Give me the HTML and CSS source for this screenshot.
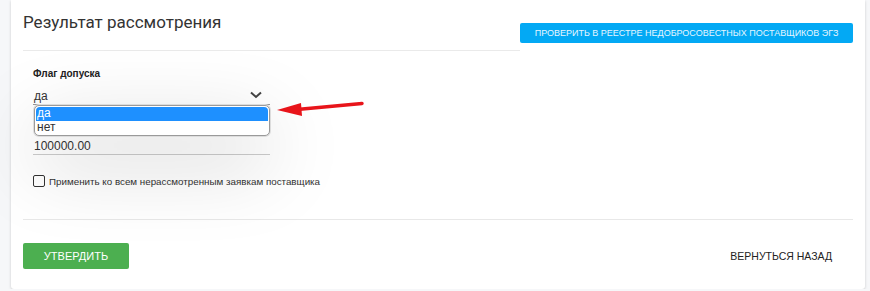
FILE: index.html
```html
<!DOCTYPE html>
<html lang="ru">
<head>
  <meta charset="UTF-8" />
  <title>Результат рассмотрения</title>
  <link rel="stylesheet" href="styles.css">
</head>
<body>
  <div class="card">
    <div class="card-head">
      <div class="card-title">Результат рассмотрения</div>
      <button class="btn btn-info">ПРОВЕРИТЬ В РЕЕСТРЕ НЕДОБРОСОВЕСТНЫХ ПОСТАВЩИКОВ ЭГЗ</button>
    </div>

    <div class="form">
      <div class="field">
        <div class="field-label">Флаг допуска</div>
        <div class="select">
          <span>да</span>
          <svg class="chevron" width="12" height="8" viewBox="0 0 12 8">
            <path d="M1 1.5 L6 6 L11 1.5" fill="none" stroke="#444" stroke-width="2"/>
          </svg>
        </div>
        <div class="dropdown">
          <div class="option selected">да</div>
          <div class="option">нет</div>
        </div>
        <svg class="pointer" width="90" height="16" viewBox="0 0 90 16">
          <path d="M20 8.5 L85 2.5" stroke="#e8141a" stroke-width="3.5" stroke-linecap="round"/>
          <polygon points="0,9 24,2 25,15" fill="#e8141a"/>
        </svg>
      </div>

      <div class="field">
        <div class="field-label"></div>
        <div class="input">100000.00</div>
      </div>

      <label class="check">
        <span class="box"></span>
        Применить ко всем нерассмотренным заявкам поставщика
      </label>
    </div>

    <div class="card-foot">
      <button class="btn btn-success">УТВЕРДИТЬ</button>
      <button class="btn btn-flat">ВЕРНУТЬСЯ НАЗАД</button>
    </div>
  </div>
</body>
</html>
```

FILE: styles.css
```css
body {
  margin: 0;
  background: #f6f7f9;
  font-family: "Liberation Sans", Arial, sans-serif;
  color: #333;
}

.card {
  margin-left: 11px;
  width: 830px;
  height: 289px;
  padding: 0 12px;
  background: #fff;
  border-radius: 0 0 3px 3px;
  box-shadow: 0 1px 3px rgba(0, 0, 0, 0.18);
  display: flex;
  flex-direction: column;
}

.card-head {
  display: flex;
  align-items: flex-start;
}

.card-title {
  flex-grow: 1;
  height: 38px;
  padding-top: 12px;
  font-family: Roboto, sans-serif;
  font-weight: 400;
  font-size: 17px;
  color: #333;
  border-bottom: 1px solid #eaeaea;
}

.btn {
  border: none;
  font-family: "Liberation Sans", Arial, sans-serif;
  cursor: pointer;
  padding: 0;
}

.btn-info {
  margin-top: 23px;
  width: 333px;
  height: 20px;
  background: #03a9f4;
  color: #e6f6ff;
  font-size: 9px;
  border-radius: 2px;
}

.form {
  padding: 17px 0 0 10px;
  height: 151px;
  border-bottom: 1px solid #e8e8e8;
}

.field {
  width: 237px;
  position: relative;
}

.field-label {
  font-size: 10px;
  font-weight: bold;
  color: #222;
  height: 14px;
}

.select {
  display: flex;
  justify-content: space-between;
  align-items: center;
  margin-top: 6px;
  height: 16px;
  padding: 0 8px 0 1px;
  font-size: 12px;
  border-bottom: 1px solid #999;
}

.chevron {
  margin-bottom: 3px;
}

.dropdown {
  position: absolute;
  top: 37px;
  left: 1px;
  width: 232px;
  padding: 1px;
  border: 1px solid #9a9a9a;
  border-radius: 5px;
  background: #fff;
  font-size: 12px;
  box-shadow: 0 0 0 1px #ddd, 0 25px 80px rgba(0, 0, 0, 0.22);
  z-index: 2;
}

.option {
  height: 13.5px;
  line-height: 13px;
  padding-left: 1px;
}

.option.selected {
  background: #1e90ff;
  color: #fff;
  border-radius: 4px 4px 0 0;
}

.pointer {
  position: absolute;
  top: 33px;
  left: 244px;
  z-index: 3;
}

.field + .field {
  margin-top: 14px;
}

.input {
  margin-top: 6px;
  height: 15px;
  padding-left: 1px;
  font-size: 12px;
  border-bottom: 1px solid #ccc;
}

.check {
  display: flex;
  align-items: center;
  gap: 4px;
  margin-top: 20px;
  font-size: 9.8px;
  color: #333;
}

.box {
  width: 10px;
  height: 10px;
  border: 1.5px solid #333;
  border-radius: 2px;
}

.card-foot {
  display: flex;
  justify-content: space-between;
  align-items: center;
  padding-top: 23px;
}

.btn-success {
  width: 106px;
  height: 26px;
  background: #4caf50;
  color: #fff;
  font-size: 11px;
  border-radius: 2px;
}

.btn-flat {
  background: none;
  color: #222;
  font-size: 10.5px;
  margin-right: 21px;
}
```
